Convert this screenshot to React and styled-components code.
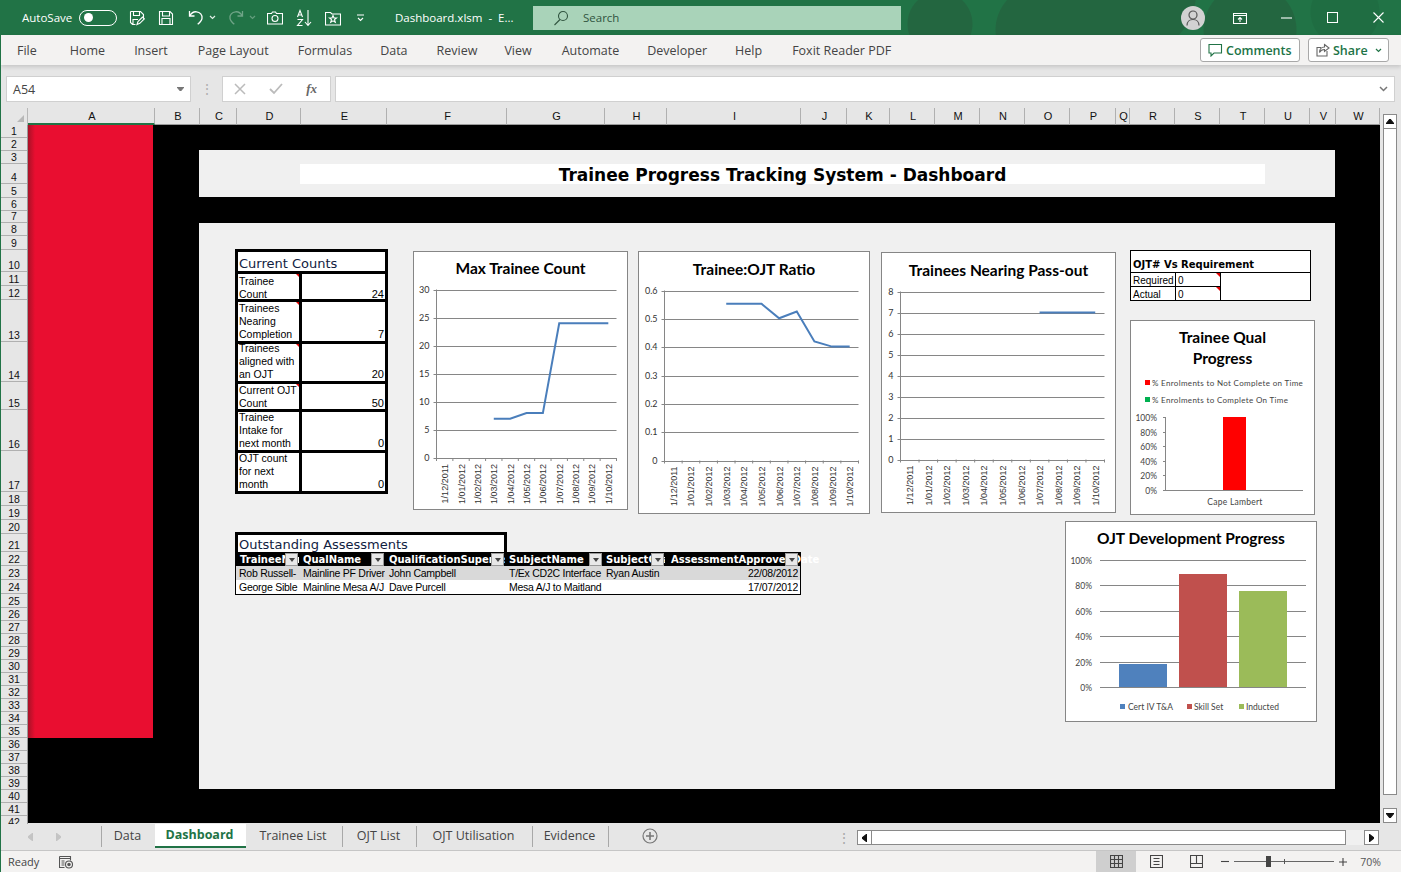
import React from 'react';
import styled, { createGlobalStyle } from 'styled-components';

const GlobalStyle = createGlobalStyle`
  html, body { margin: 0; padding: 0; background: #e6e6e6; }
  * { box-sizing: border-box; }
`;

const uiFont = `"Open Sans", "Noto Sans", sans-serif`;
const cellFont = `"Liberation Sans", Arial, sans-serif`;
const wideFont = `"DejaVu Sans", Verdana, sans-serif`;
const chartFont = `Lato, "Open Sans", sans-serif`;

const Window = styled.div`
  width: 1401px;
  height: 872px;
  display: flex;
  flex-direction: column;
  overflow: hidden;
  border-left: 1px solid #217346;
  font-family: ${uiFont};
`;

/* ---------- title bar ---------- */

const TitleBar = styled.div`
  height: 35px;
  flex: none;
  margin-left: -1px;
  padding-left: 22px;
  display: flex;
  align-items: center;
  color: #fff;
  font-size: 12px;
  background-color: #217346;
  background-image:
    radial-gradient(circle at 940px 24px, #236640 32px, transparent 33px),
    radial-gradient(circle at 1040px 30px, #236640 44px, transparent 45px),
    radial-gradient(circle at 1130px -10px, #236640 66px, transparent 67px),
    radial-gradient(circle at 1250px 30px, #236640 46px, transparent 47px),
    radial-gradient(circle at 1345px 12px, #1f6d42 34px, transparent 35px);
`;

const AutoSaveLabel = styled.span`
  width: 50px;
  white-space: nowrap;
  font-size: 11.5px;
`;

const Toggle = styled.span`
  width: 38px;
  height: 16px;
  margin-left: 7px;
  padding-left: 4px;
  border: 1px solid #fff;
  border-radius: 8px;
  display: flex;
  align-items: center;
  &::before {
    content: '';
    width: 9px;
    height: 9px;
    border-radius: 50%;
    background: #fff;
  }
`;

const QatIcon = styled.span`
  display: flex;
  margin-left: ${({ $gap }) => $gap}px;
  opacity: ${({ $dim }) => ($dim ? 0.35 : 1)};
`;

const DocTitle = styled.span`
  width: 117px;
  margin-left: 31px;
  white-space: nowrap;
  font-size: 11.5px;
`;

const SearchBox = styled.div`
  width: 368px;
  height: 24px;
  margin-left: 21px;
  padding-left: 20px;
  display: flex;
  align-items: center;
  gap: 14px;
  background: #a9d3b9;
  color: #30543f;
  font-size: 11.5px;
`;

const Avatar = styled.span`
  width: 24px;
  height: 24px;
  margin-left: auto;
  margin-right: 12px;
  border-radius: 50%;
  background: #d2d2d2;
  display: flex;
  align-items: center;
  justify-content: center;
`;

const WinButton = styled.span`
  width: 46px;
  height: 35px;
  display: flex;
  align-items: center;
  justify-content: center;
`;

/* ---------- ribbon ---------- */

const Ribbon = styled.div`
  height: 30px;
  flex: none;
  padding: 0 12px 0 16px;
  display: flex;
  align-items: center;
  background: #f3f2f1;
  box-shadow: 0 2px 4px rgba(0, 0, 0, 0.14);
  position: relative;
  z-index: 1;
`;

const RibbonTab = styled.span`
  margin-left: ${({ $gap }) => $gap}px;
  color: #444;
  font-size: 12.5px;
  white-space: nowrap;
`;

const RibbonActions = styled.div`
  margin-left: auto;
  display: flex;
  gap: 8px;
`;

const ActionButton = styled.span`
  width: ${({ $w }) => $w}px;
  height: 24px;
  padding: 0 6px 0 7px;
  display: flex;
  align-items: center;
  gap: 3px;
  border: 1px solid #a8a8a8;
  border-radius: 3px;
  background: #fff;
  color: #217346;
  font-size: 12.5px;
  font-weight: 600;
`;

const ShareCaret = styled.span`
  margin-left: auto;
  display: flex;
`;

/* ---------- formula bar ---------- */

const FormulaBar = styled.div`
  height: 43px;
  flex: none;
  padding: 11px 6px 0 5px;
  display: flex;
  background: #e6e6e6;
`;

const FieldBox = styled.div`
  width: ${({ $w }) => ($w ? `${$w}px` : 'auto')};
  flex: ${({ $w }) => ($w ? 'none' : 1)};
  height: 26px;
  margin-left: ${({ $gap }) => $gap || 0}px;
  padding: 0 6px;
  display: flex;
  align-items: center;
  justify-content: space-between;
  border: 1px solid #d0d0d0;
  background: #fff;
  color: #444;
  font-size: 12.5px;
`;

const GripDots = styled.span`
  width: 31px;
  height: 26px;
  display: flex;
  align-items: center;
  justify-content: center;
  color: #b0b0b0;
  font-size: 14px;
  line-height: 1;
`;

const FxMark = styled.span`
  font-family: "Liberation Serif", serif;
  font-style: italic;
  font-weight: 700;
  font-size: 13px;
  color: #666;
`;

const FormulaIcons = styled.div`
  width: 100%;
  padding: 0 7px 0 5px;
  display: flex;
  align-items: center;
  justify-content: space-between;
`;

/* ---------- grid ---------- */

const GridArea = styled.div`
  flex: 1;
  min-height: 0;
  display: flex;
`;

const GridMain = styled.div`
  width: 1379px;
  display: flex;
  flex-direction: column;
`;

const ColHeaderRow = styled.div`
  height: 17px;
  flex: none;
  display: flex;
  background: #e6e6e6;
`;

const CornerCell = styled.div`
  width: 27px;
  flex: none;
  position: relative;
  border-right: 1px solid #b8b8b8;
  &::after {
    content: '';
    position: absolute;
    right: 3px;
    bottom: 3px;
    border-left: 7px solid transparent;
    border-bottom: 7px solid #b8b8b8;
  }
`;

const ColHeader = styled.div`
  width: ${({ $w }) => $w}px;
  flex: none;
  padding-left: 2px;
  display: flex;
  align-items: center;
  justify-content: center;
  border-right: 1px solid #b0b0b0;
  border-bottom: ${({ $active }) => ($active ? '2px solid #217346' : '1px solid #9a9a9a')};
  color: #111;
  font-family: ${cellFont};
  font-size: 11px;
`;

const GridBody = styled.div`
  flex: 1;
  min-height: 0;
  display: flex;
`;

const RowHeaders = styled.div`
  width: 27px;
  flex: none;
  overflow: hidden;
  background: #e6e6e6;
  border-right: 1px solid #9a9a9a;
`;

const RowHeader = styled.div`
  height: ${({ $h }) => $h}px;
  display: flex;
  align-items: flex-end;
  justify-content: center;
  border-bottom: 1px solid #b0b0b0;
  color: #111;
  font-family: ${cellFont};
  font-size: 10.5px;
  line-height: 11px;
`;

const Sheet = styled.div`
  flex: 1;
  height: 698px;
  display: flex;
  background: #000;
  overflow: hidden;
`;

const RedColumn = styled.div`
  width: 125px;
  height: 613px;
  flex: none;
  background: linear-gradient(90deg, #a81227 0, #e90e30 7px);
`;

const Dashboard = styled.div`
  width: 1136px;
  margin-left: 46px;
  padding-top: 25px;
  display: flex;
  flex-direction: column;
  gap: 26px;
`;

const Banner = styled.div`
  height: 47px;
  padding: 14px 70px 0 101px;
  background: #f0f0f0;
`;

const BannerTitle = styled.div`
  height: 20px;
  background: #fff;
  color: #000;
  font-family: ${wideFont};
  font-size: 17px;
  font-weight: 700;
  line-height: 23px;
  text-align: center;
  white-space: nowrap;
`;

const Panel = styled.div`
  height: 566px;
  padding: 26px 18px 0 36px;
  background: #f0f0f0;
  display: flex;
  flex-direction: column;
  gap: 6px;
`;

const TopRow = styled.div`
  height: 266px;
  display: flex;
  align-items: flex-start;
`;

const BottomRow = styled.div`
  display: flex;
  align-items: flex-start;
  justify-content: space-between;
`;

/* ---------- counts table ---------- */

const CountsTable = styled.div`
  width: 153px;
  flex: none;
  border: 3px solid #000;
  background: #fff;
  font-family: ${cellFont};
  font-size: 10.5px;
  line-height: 13px;
  color: #000;
`;

const CountsHeading = styled.div`
  height: 22px;
  padding: 4px 0 0 1px;
  border-bottom: 3px solid #000;
  font-family: ${wideFont};
  font-size: 13px;
  line-height: 15px;
  color: #10213f;
  white-space: nowrap;
`;

const CountsRow = styled.div`
  height: ${({ $h }) => $h}px;
  display: flex;
  border-bottom: ${({ $last }) => ($last ? 'none' : '3px solid #000')};
`;

const CountsLabel = styled.div`
  width: 61px;
  flex: none;
  padding-left: 1px;
  position: relative;
  white-space: pre;
  display: flex;
  align-items: flex-end;
  &::after {
    content: '';
    display: ${({ $note }) => ($note ? 'block' : 'none')};
    position: absolute;
    top: 0;
    right: 0;
    border-left: 3px solid transparent;
    border-top: 3px solid #e00000;
  }
`;

const CountsText = styled.span`
  margin-bottom: ${({ $drop }) => -($drop || 0)}px;
`;

const CountsValue = styled.div`
  flex: 1;
  border-left: 3px solid #000;
  padding-right: 1px;
  display: flex;
  align-items: flex-end;
  justify-content: flex-end;
  font-size: 11px;
`;

/* ---------- charts ---------- */

const ChartFrame = styled.div`
  width: ${({ $w }) => $w}px;
  height: ${({ $h }) => $h}px;
  flex: none;
  margin-left: ${({ $ml }) => $ml || 0}px;
  margin-top: ${({ $mt }) => $mt || 0}px;
  border: 1px solid #868686;
  background: #fff;
  display: flex;
  flex-direction: column;
`;

const ChartTitle = styled.div`
  height: ${({ $h }) => $h}px;
  flex: none;
  padding-top: ${({ $pt }) => $pt}px;
  text-align: center;
  color: #000;
  font-family: ${chartFont};
  font-size: 15.5px;
  font-weight: 700;
  line-height: 21px;
  white-space: nowrap;
`;

const ChartSvg = styled.svg`
  display: block;
  flex: none;
  font-family: ${chartFont};
`;

const RightColumn = styled.div`
  margin-left: 14px;
  display: flex;
  flex-direction: column;
  gap: 19px;
`;

/* ---------- OJT requirement table ---------- */

const OjtTable = styled.div`
  width: 181px;
  height: 51px;
  margin-top: 1px;
  border: 1px solid #000;
  background: #fff;
  font-family: ${cellFont};
  font-size: 10px;
  line-height: 15px;
  color: #000;
`;

const OjtHeading = styled.div`
  height: 22px;
  padding: 7px 0 0 2px;
  border-bottom: 1px solid #000;
  font-family: ${wideFont};
  font-size: 10px;
  font-weight: 700;
  line-height: 14px;
  white-space: nowrap;
`;

const OjtRow = styled.div`
  height: ${({ $h }) => $h}px;
  width: 90px;
  display: flex;
  border-bottom: ${({ $last }) => ($last ? 'none' : '1px solid #000')};
`;

const OjtCell = styled.div`
  width: 45px;
  padding-left: 2px;
  position: relative;
  border-right: 1px solid #000;
  &::after {
    content: '';
    display: ${({ $note }) => ($note ? 'block' : 'none')};
    position: absolute;
    top: 0;
    right: 0;
    border-left: 4px solid transparent;
    border-top: 4px solid #e00000;
  }
`;

/* ---------- assessments table ---------- */

const Assessments = styled.div`
  width: 566px;
  margin-top: 11px;
  font-family: ${cellFont};
  font-size: 10.5px;
  color: #000;
`;

const AssessmentsHeading = styled.div`
  width: 272px;
  height: 20px;
  padding: 2px 0 0 1px;
  border: 3px solid #000;
  border-bottom: 0;
  background: #fff;
  font-family: ${wideFont};
  font-size: 13px;
  line-height: 15px;
  color: #10213f;
  white-space: nowrap;
`;

const HeadRow = styled.div`
  height: 14px;
  display: flex;
  background: #000;
`;

const HeadCell = styled.div`
  width: ${({ $w }) => $w}px;
  padding-left: ${({ $pl }) => $pl}px;
  position: relative;
  overflow: ${({ $spill }) => ($spill ? 'visible' : 'hidden')};
  color: #fff;
  font-family: ${wideFont};
  font-size: 10px;
  font-weight: 700;
  line-height: 15px;
  white-space: nowrap;
`;

const FilterButton = styled.span`
  position: absolute;
  top: 1px;
  right: 1px;
  width: 13px;
  height: 13px;
  border: 1px solid #999;
  background: #e8e8e8;
  display: flex;
  align-items: center;
  justify-content: center;
  &::before {
    content: '';
    border-left: 3px solid transparent;
    border-right: 3px solid transparent;
    border-top: 4px solid #444;
  }
`;

const DataRows = styled.div`
  border: 1px solid #000;
  border-top: 0;
`;

const DataRow = styled.div`
  height: 14px;
  display: flex;
  background: ${({ $shade }) => ($shade ? '#d9d9d9' : '#fff')};
  line-height: 14px;
`;

const DataCell = styled.div`
  width: ${({ $w }) => $w}px;
  padding-left: ${({ $pl }) => $pl}px;
  overflow: hidden;
  white-space: nowrap;
  text-align: ${({ $right }) => ($right ? 'right' : 'left')};
  letter-spacing: -0.25px;
`;

/* ---------- scrollbars ---------- */

const VScroll = styled.div`
  flex: 1;
  padding: 6px 4px 1px 3px;
  display: flex;
  flex-direction: column;
  background: #e6e6e6;
`;

const ScrollButton = styled.div`
  width: ${({ $w }) => $w || 14}px;
  height: ${({ $h }) => $h || 15}px;
  flex: none;
  border: 1px solid #8a8a8a;
  background: #fff;
  display: flex;
  align-items: center;
  justify-content: center;
`;

const VThumb = styled.div`
  height: 666px;
  flex: none;
  border: 1px solid #8a8a8a;
  border-top: 0;
  background: #fff;
`;

const VRest = styled.div`
  flex: 1;
`;

const TabBar = styled.div`
  height: 27px;
  flex: none;
  display: flex;
  align-items: flex-start;
  background: #e6e6e6;
  border-bottom: 1px solid #c6c6c6;
`;

const NavArrows = styled.div`
  width: 100px;
  height: 26px;
  padding: 0 40px 0 27px;
  display: flex;
  align-items: center;
  justify-content: space-between;
`;

const SheetTab = styled.div`
  height: ${({ $active }) => ($active ? 24 : 21)}px;
  margin-top: ${({ $active }) => ($active ? 0 : 2)}px;
  width: ${({ $w }) => $w}px;
  flex: none;
  padding-right: 2px;
  padding-bottom: ${({ $active }) => ($active ? 1 : 2)}px;
  display: flex;
  align-items: center;
  justify-content: center;
  border-left: ${({ $active, $noLine }) => ($active || $noLine ? '0' : '1px solid #a8a8a8')};
  border-bottom: ${({ $active }) => ($active ? '2px solid #217346' : '0')};
  background: ${({ $active }) => ($active ? '#fff' : 'transparent')};
  color: ${({ $active }) => ($active ? '#217346' : '#444')};
  font-size: 12.5px;
  font-weight: ${({ $active }) => ($active ? 700 : 400)};
  white-space: nowrap;
`;

const TabEnd = styled.div`
  width: 1px;
  height: 21px;
  margin-top: 2px;
  background: #a8a8a8;
`;

const AddSheet = styled.span`
  margin: 4px 0 0 33px;
  display: flex;
`;

const TabGrip = styled.span`
  margin-left: 179px;
  width: 20px;
  height: 26px;
  display: flex;
  align-items: center;
  color: #aaa;
  font-size: 14px;
`;

const HScroll = styled.div`
  margin-top: 6px;
  width: 522px;
  display: flex;
`;

const HThumb = styled.div`
  width: 474px;
  height: 15px;
  border: 1px solid #8a8a8a;
  border-left: 0;
  background: #fff;
`;

const HRest = styled.div`
  width: 18px;
  height: 15px;
  background: #f0f0f0;
`;

/* ---------- status bar ---------- */

const StatusBar = styled.div`
  height: 21px;
  flex: none;
  padding-left: 7px;
  display: flex;
  align-items: center;
  background: #f3f2f1;
  color: #444;
  font-size: 11px;
`;

const ViewButton = styled.span`
  width: 40px;
  height: 21px;
  display: flex;
  align-items: center;
  justify-content: center;
  background: ${({ $active }) => ($active ? '#cfcfcf' : 'transparent')};
`;

const ZoomSlider = styled.div`
  width: 100px;
  height: 11px;
  margin: 0 5px;
  display: flex;
  align-items: center;
  position: relative;
  &::before {
    content: '';
    width: 100%;
    height: 1px;
    background: #666;
  }
`;

const ZoomThumb = styled.span`
  position: absolute;
  left: 32px;
  top: 0;
  width: 5px;
  height: 11px;
  background: #444;
`;

const ZoomTick = styled.span`
  position: absolute;
  left: 50px;
  top: 3px;
  width: 1px;
  height: 5px;
  background: #555;
`;

const ZoomLabel = styled.span`
  margin-left: 13px;
  font-size: 10.5px;
  color: #555;
`;

/* ---------- data ---------- */

const colWidths = [
  ['A', 127, true], ['B', 45], ['C', 37], ['D', 64], ['E', 86], ['F', 120], ['G', 98], ['H', 62], ['I', 134],
  ['J', 46], ['K', 43], ['L', 45], ['M', 45], ['N', 45], ['O', 45], ['P', 46], ['Q', 14], ['R', 45], ['S', 45],
  ['T', 45], ['U', 45], ['V', 26], ['W', 44],
];

const rowHeights = [
  13, 13, 13, 20, 14, 13, 12, 13, 14, 22, 14, 14, 42, 40, 28, 41, 41, 14, 14, 14, 18, 14, 14, 14, 14,
  13, 13, 13, 13, 13, 13, 13, 13, 13, 13, 13, 13, 13, 13, 13, 13, 13,
];

const counts = [
  { label: 'Trainee\nCount', value: 24, h: 28, note: true, drop: 2 },
  { label: 'Trainees\nNearing\nCompletion', value: 7, h: 42, note: true },
  { label: 'Trainees\naligned with\nan OJT', value: 20, h: 40, note: true },
  { label: 'Current OJT\nCount', value: 50, h: 28, note: true, drop: 1 },
  { label: 'Trainee\nIntake for\nnext month', value: 0, h: 41 },
  { label: 'OJT count\nfor next\nmonth', value: 0, h: 38, last: true },
];

const dateLabels = [
  '1/12/2011', '1/01/2012', '1/02/2012', '1/03/2012', '1/04/2012', '1/05/2012',
  '1/06/2012', '1/07/2012', '1/08/2012', '1/09/2012', '1/10/2012',
];

const lineCharts = [
  {
    title: 'Max Trainee Count',
    frame: { x: 413, y: 251, w: 215, h: 259 },
    ml: 25, mt: 2, titleH: 30, titlePt: 6,
    plot: { x0: 436.5, x1: 616.5, top: 289.5, bottom: 458 },
    yLabels: ['0', '5', '10', '15', '20', '25', '30'],
    max: 30,
    values: [null, null, null, 7, 7, 8, 8, 24, 24, 24, 24],
  },
  {
    title: 'Trainee:OJT Ratio',
    frame: { x: 638, y: 251, w: 232, h: 263 },
    ml: 10, mt: 2, titleH: 30, titlePt: 7,
    plot: { x0: 664.5, x1: 858.5, top: 290.5, bottom: 460.5 },
    yLabels: ['0', '0.1', '0.2', '0.3', '0.4', '0.5', '0.6'],
    max: 0.6,
    values: [null, null, null, 0.553, 0.553, 0.553, 0.502, 0.526, 0.42, 0.402, 0.402],
  },
  {
    title: 'Trainees Nearing Pass-out',
    frame: { x: 881, y: 252, w: 235, h: 261 },
    ml: 11, mt: 3, titleH: 30, titlePt: 7,
    plot: { x0: 900.5, x1: 1104.5, top: 291.5, bottom: 459.5 },
    yLabels: ['0', '1', '2', '3', '4', '5', '6', '7', '8'],
    max: 8,
    values: [null, null, null, null, null, null, null, 7, 7, 7, 7],
  },
];

const assessmentCols = [
  { name: 'TraineeName', w: 64, pl: 5 },
  { name: 'QualName', w: 86, pl: 4 },
  { name: 'QualificationSupervisor', w: 120, pl: 4 },
  { name: 'SubjectName', w: 98, pl: 4 },
  { name: 'SubjectCoach', w: 62, pl: 3 },
  { name: 'AssessmentApprovedDate', w: 134, pl: 6, spill: true },
];

const assessmentRows = [
  ['Rob Russell-', 'Mainline PF Driver', 'John Campbell', 'T/Ex CD2C Interface', 'Ryan Austin', '22/08/2012'],
  ['George Sible', 'Mainline Mesa A/J', 'Dave Purcell', 'Mesa A/J to Maitland', '', '17/07/2012'],
];

const dataPadding = [3, 4, 4, 4, 3, 0];

const ribbonTabs = [
  ['File', 0], ['Home', 33], ['Insert', 29], ['Page Layout', 30], ['Formulas', 29], ['Data', 28],
  ['Review', 29], ['View', 27], ['Automate', 30], ['Developer', 28], ['Help', 28], ['Foxit Reader PDF', 30],
];

const sheetTabs = [
  ['Data', 54], ['Dashboard', 91, true], ['Trainee List', 96, false, true], ['OJT List', 74],
  ['OJT Utilisation', 116], ['Evidence', 76],
];

/* ---------- small drawings ---------- */

const Ico = ({ w = 16, h = 16, children, stroke = '#fff', sw = 1.1 }) => (
  <svg width={w} height={h} viewBox={`0 0 ${w} ${h}`} fill="none" stroke={stroke} strokeWidth={sw}>
    {children}
  </svg>
);

const Chevron = () => (
  <Ico w={7} h={5} sw={1.2} stroke="#dfeee5">
    <path d="M1 1l2.5 2.5L6 1" />
  </Ico>
);

const LineChart = ({ chart }) => {
  const { frame, plot, yLabels, max, values } = chart;
  const n = values.length;
  const step = (plot.x1 - plot.x0) / n;
  const innerW = frame.w - 2;
  const svgH = frame.h - 2 - chart.titleH;
  const viewY = frame.y + 1 + chart.titleH;
  const points = values
    .map((v, i) => (v === null ? null : `${plot.x0 + step * (i + 0.5)},${plot.bottom - (v / max) * (plot.bottom - plot.top)}`))
    .filter(Boolean)
    .join(' ');
  return (
    <ChartFrame $w={frame.w} $h={frame.h} $ml={chart.ml} $mt={chart.mt}>
      <ChartTitle $h={chart.titleH} $pt={chart.titlePt}>{chart.title}</ChartTitle>
      <ChartSvg width={innerW} height={svgH} viewBox={`${frame.x + 1} ${viewY} ${innerW} ${svgH}`}>
        {yLabels.map((label, i) => {
          const y = Math.round(plot.bottom - (i / (yLabels.length - 1)) * (plot.bottom - plot.top)) + 0.5;
          return (
            <g key={label}>
              <line x1={plot.x0 - 3} x2={plot.x1} y1={y} y2={y} stroke="#868686" />
              <text x={plot.x0 - 7} y={y + 2.5} textAnchor="end" fontSize="9" fill="#333">{label}</text>
            </g>
          );
        })}
        <line x1={plot.x0} x2={plot.x0} y1={plot.top} y2={plot.bottom + 3} stroke="#868686" />
        {dateLabels.map((label, i) => {
          const x = plot.x0 + step * (i + 1);
          const cx = plot.x0 + step * (i + 0.5) + 3.5;
          const by = plot.bottom + 6;
          return (
            <g key={label}>
              <line x1={x} x2={x} y1={plot.bottom} y2={plot.bottom + 3} stroke="#868686" />
              <text
                x={cx}
                y={by}
                textAnchor="end"
                fontFamily={cellFont}
                fontSize="9"
                fill="#333"
                transform={`rotate(-90 ${cx} ${by})`}
              >
                {label}
              </text>
            </g>
          );
        })}
        <polyline points={points} fill="none" stroke="#4a7ebb" strokeWidth="2" />
      </ChartSvg>
    </ChartFrame>
  );
};

const QualChart = () => (
  <ChartFrame $w={185} $h={195}>
    <ChartTitle $h={52} $pt={6}>Trainee Qual<br />Progress</ChartTitle>
    <ChartSvg width={183} height={141} viewBox="1131 373 183 141">
      <rect x="1145" y="380" width="5" height="5" fill="#ff0000" />
      <text x="1152" y="386" fontSize="8" fill="#444" letterSpacing="0.33">% Enrolments to Not Complete on Time</text>
      <rect x="1145" y="397" width="5" height="5" fill="#00b050" />
      <text x="1152" y="403" fontSize="8" fill="#444" letterSpacing="0.33">% Enrolments to Complete On Time</text>
      {['0%', '20%', '40%', '60%', '80%', '100%'].map((label, i) => {
        const y = Math.round(490 - i * 14.6) + 0.5;
        return (
          <g key={label}>
            <line x1="1163" x2="1165.5" y1={y} y2={y} stroke="#868686" />
            <text x="1157" y={y + 3} textAnchor="end" fontSize="8.5" fill="#444">{label}</text>
          </g>
        );
      })}
      <line x1="1165.5" x2="1165.5" y1="417" y2="490.5" stroke="#868686" />
      <line x1="1165" x2="1303" y1="490.5" y2="490.5" stroke="#868686" />
      <rect x="1223" y="417" width="23" height="73" fill="#ff0000" />
      <text x="1235" y="505" textAnchor="middle" fontSize="8.5" fill="#444" letterSpacing="0.25">Cape Lambert</text>
    </ChartSvg>
  </ChartFrame>
);

const DevChart = () => (
  <ChartFrame $w={252} $h={201}>
    <ChartTitle $h={30} $pt={6}>OJT Development Progress</ChartTitle>
    <ChartSvg width={250} height={169} viewBox="1066 552 250 169">
      {['0%', '20%', '40%', '60%', '80%', '100%'].map((label, i) => {
        const y = Math.round(687 - i * 25.4) + 0.5;
        return (
          <g key={label}>
            <line x1="1100" x2="1306" y1={y} y2={y} stroke="#868686" />
            <text x="1092" y={y + 3} textAnchor="end" fontSize="8.5" fill="#444">{label}</text>
          </g>
        );
      })}
      <rect x="1119" y="664" width="48" height="23" fill="#4f81bd" />
      <rect x="1179" y="574" width="48" height="113" fill="#c0504d" />
      <rect x="1239" y="591" width="48" height="96" fill="#9bbb59" />
      <rect x="1120" y="704" width="5" height="5" fill="#4f81bd" />
      <text x="1128" y="710" fontSize="8.5" fill="#444">Cert IV T&amp;A</text>
      <rect x="1187" y="704" width="5" height="5" fill="#c0504d" />
      <text x="1194" y="710" fontSize="8.5" fill="#444">Skill Set</text>
      <rect x="1239" y="704" width="5" height="5" fill="#9bbb59" />
      <text x="1246" y="710" fontSize="8.5" fill="#444">Inducted</text>
    </ChartSvg>
  </ChartFrame>
);

const App = () => (
  <Window>
    <GlobalStyle />
    <TitleBar>
      <AutoSaveLabel>AutoSave</AutoSaveLabel>
      <Toggle />
      <QatIcon $gap={12}>
        <Ico>
          <path d="M1.5 1.5h10l3 3v4M1.5 1.5v11l2 2h3M4.5 1.5v4h6v-4M4 14.5v-5h5" />
          <path d="M8 14.5l1-3 4.5-4.5 1.8 1.8L10.8 13.3z" />
        </Ico>
      </QatIcon>
      <QatIcon $gap={13}>
        <Ico>
          <path d="M1.5 1.5h10.5l2.5 2.5v10.5h-13z" />
          <path d="M4.5 1.5v4.5h7v-4.5M4 14.5v-6h8v6" />
        </Ico>
      </QatIcon>
      <QatIcon $gap={14}>
        <Ico w={16} h={17} sw={1.3}>
          <path d="M1.5 2v5h5M1.8 6.8C3.5 3.8 6 2.5 8.5 2.8c3.5.4 6 3 5.5 6.5-.3 2.2-2 4-4.3 6" />
        </Ico>
      </QatIcon>
      <QatIcon $gap={5}><Chevron /></QatIcon>
      <QatIcon $gap={12} $dim>
        <Ico w={16} h={17} sw={1.3}>
          <path d="M14.5 2v5h-5M14.2 6.8C12.5 3.8 10 2.5 7.5 2.8 4 3.2 1.5 5.8 2 9.3c.3 2.2 2 4 4.3 6" />
        </Ico>
      </QatIcon>
      <QatIcon $gap={5} $dim><Chevron /></QatIcon>
      <QatIcon $gap={11}>
        <Ico>
          <path d="M.5 3.5h4l1-1.5h3l1 1.5h6V14H.5z" />
          <circle cx="8" cy="8.5" r="3" />
        </Ico>
      </QatIcon>
      <QatIcon $gap={13}>
        <Ico w={16} h={18}>
          <path d="M1.5 8L4 1.5 6.5 8M2.5 6h3M1.5 10.5h5l-5 6h5" />
          <path d="M12 1v15M9 13l3 3.5 3-3.5" />
        </Ico>
      </QatIcon>
      <QatIcon $gap={13}>
        <Ico>
          <path d="M.5 2.5h5L7 4h8.5v11H.5z" />
          <path d="M8 5.5L9 8h2.500L9.500 9.700l.8 2.600L8 10.800l-2.300 1.500.8-2.600L4.500 8H7z" />
        </Ico>
      </QatIcon>
      <QatIcon $gap={16}>
        <Ico w={7} h={8} sw={1.1}>
          <path d="M0 1h7M1 4l2.5 2.5L6 4" />
        </Ico>
      </QatIcon>
      <DocTitle>Dashboard.xlsm&nbsp; -&nbsp; E...</DocTitle>
      <SearchBox>
        <Ico stroke="#30543f">
          <circle cx="10" cy="6" r="4.5" />
          <path d="M7 9.5L1.5 15" />
        </Ico>
        Search
      </SearchBox>
      <Avatar>
        <Ico w={14} h={16} stroke="#555" sw={1.2}>
          <circle cx="7" cy="5" r="4" />
          <path d="M1 15.5c0-3.500 2.500-6 6-6s6 2.500 6 6" />
        </Ico>
      </Avatar>
      <WinButton>
        <Ico w={14} h={12}>
          <path d="M.5 1.5h13v10H.5zM.5 3.5h13M7 10V5.5M5 7.5l2-2 2 2" />
        </Ico>
      </WinButton>
      <WinButton>
        <Ico w={11} h={2}><path d="M0 1h11" /></Ico>
      </WinButton>
      <WinButton>
        <Ico w={11} h={11}><path d="M.5.5h10v10H.5z" /></Ico>
      </WinButton>
      <WinButton>
        <Ico w={11} h={11}><path d="M.5.5l10 10M10.5.5l-10 10" /></Ico>
      </WinButton>
    </TitleBar>

    <Ribbon>
      {ribbonTabs.map(([name, gap]) => (
        <RibbonTab key={name} $gap={gap}>{name}</RibbonTab>
      ))}
      <RibbonActions>
        <ActionButton $w={100}>
          <Ico w={15} h={14} stroke="#217346">
            <path d="M1 1.5h12.5V10H6l-3 3v-3H1z" />
          </Ico>
          Comments
        </ActionButton>
        <ActionButton $w={81}>
          <Ico w={14} h={14} stroke="#666">
            <path d="M11 8v5H1V4.5h4M8.5 1.5L13 5 8.5 8.5v-2c-2.500 0-4 1-5 3 0-3.500 2-5.500 5-5.500z" />
          </Ico>
          Share
          <ShareCaret>
            <Ico w={7} h={5} stroke="#217346" sw={1.2}>
              <path d="M1 1l2.5 2.5L6 1" />
            </Ico>
          </ShareCaret>
        </ActionButton>
      </RibbonActions>
    </Ribbon>

    <FormulaBar>
      <FieldBox $w={185}>
        A54
        <Ico w={7} h={4} stroke="#777"><path d="M0 0h7L3.5 4z" fill="#777" /></Ico>
      </FieldBox>
      <GripDots>⋮</GripDots>
      <FieldBox $w={109}>
        <FormulaIcons>
          <Ico w={12} h={12} stroke="#bbb" sw={1.5}><path d="M1 1l10 10M11 1L1 11" /></Ico>
          <Ico w={14} h={12} stroke="#bbb" sw={1.8}><path d="M1 6l4 4 8-9" /></Ico>
          <FxMark>fx</FxMark>
        </FormulaIcons>
      </FieldBox>
      <FieldBox $gap={4}>
        <span />
        <Ico w={9} h={6} stroke="#777" sw={1.5}><path d="M1 1l3.5 3.5L8 1" /></Ico>
      </FieldBox>
    </FormulaBar>

    <GridArea>
      <GridMain>
        <ColHeaderRow>
          <CornerCell />
          {colWidths.map(([name, w, active]) => (
            <ColHeader key={name} $w={w} $active={active}>{name}</ColHeader>
          ))}
        </ColHeaderRow>
        <GridBody>
          <RowHeaders>
            {rowHeights.map((h, i) => (
              <RowHeader key={i} $h={h}>{i + 1}</RowHeader>
            ))}
          </RowHeaders>
          <Sheet>
            <RedColumn />
            <Dashboard>
              <Banner>
                <BannerTitle>Trainee Progress Tracking System - Dashboard</BannerTitle>
              </Banner>
              <Panel>
                <TopRow>
                  <CountsTable>
                    <CountsHeading>Current Counts</CountsHeading>
                    {counts.map((row) => (
                      <CountsRow key={row.label} $h={row.h} $last={row.last}>
                        <CountsLabel $note={row.note}>
                          <CountsText $drop={row.drop}>{row.label}</CountsText>
                        </CountsLabel>
                        <CountsValue>
                          <CountsText $drop={row.drop}>{row.value}</CountsText>
                        </CountsValue>
                      </CountsRow>
                    ))}
                  </CountsTable>
                  {lineCharts.map((chart) => (
                    <LineChart key={chart.title} chart={chart} />
                  ))}
                  <RightColumn>
                    <OjtTable>
                      <OjtHeading>OJT# Vs Requirement</OjtHeading>
                      <OjtRow $h={14}>
                        <OjtCell>Required</OjtCell>
                        <OjtCell $note>0</OjtCell>
                      </OjtRow>
                      <OjtRow $h={13} $last>
                        <OjtCell>Actual</OjtCell>
                        <OjtCell $note>0</OjtCell>
                      </OjtRow>
                    </OjtTable>
                    <QualChart />
                  </RightColumn>
                </TopRow>
                <BottomRow>
                  <Assessments>
                    <AssessmentsHeading>Outstanding Assessments</AssessmentsHeading>
                    <HeadRow>
                      {assessmentCols.map((col) => (
                        <HeadCell key={col.name} $w={col.w} $pl={col.pl} $spill={col.spill}>
                          {col.name}
                          <FilterButton />
                        </HeadCell>
                      ))}
                    </HeadRow>
                    <DataRows>
                      {assessmentRows.map((row, r) => (
                        <DataRow key={row[0]} $shade={r === 0}>
                          {row.map((value, c) => (
                            <DataCell
                              key={c}
                              $w={assessmentCols[c].w - (c === 0 || c === 5 ? 1 : 0)}
                              $right={c === 5}
                              $pl={dataPadding[c]}
                            >
                              {value}
                            </DataCell>
                          ))}
                        </DataRow>
                      ))}
                    </DataRows>
                  </Assessments>
                  <DevChart />
                </BottomRow>
              </Panel>
            </Dashboard>
          </Sheet>
        </GridBody>
      </GridMain>
      <VScroll>
        <ScrollButton>
          <Ico w={8} h={5} stroke="#111"><path d="M4 0l4 5H0z" fill="#111" /></Ico>
        </ScrollButton>
        <VThumb />
        <VRest />
        <ScrollButton>
          <Ico w={8} h={5} stroke="#111"><path d="M0 0h8L4 5z" fill="#111" /></Ico>
        </ScrollButton>
      </VScroll>
    </GridArea>

    <TabBar>
      <NavArrows>
        <Ico w={5} h={8} stroke="#c4c4c4"><path d="M5 0v8L0 4z" fill="#c4c4c4" /></Ico>
        <Ico w={5} h={8} stroke="#c4c4c4"><path d="M0 0v8l5-4z" fill="#c4c4c4" /></Ico>
      </NavArrows>
      {sheetTabs.map(([name, w, active, noLine]) => (
        <SheetTab key={name} $w={w} $active={active} $noLine={noLine}>{name}</SheetTab>
      ))}
      <TabEnd />
      <AddSheet>
        <Ico w={16} h={16} stroke="#777" sw={1.2}>
          <circle cx="8" cy="8" r="7" />
          <path d="M8 4v8M4 8h8" strokeWidth="1.6" />
        </Ico>
      </AddSheet>
      <TabGrip>⋮</TabGrip>
      <HScroll>
        <ScrollButton $w={15}>
          <Ico w={5} h={8} stroke="#111"><path d="M5 0v8L0 4z" fill="#111" /></Ico>
        </ScrollButton>
        <HThumb />
        <HRest />
        <ScrollButton $w={15}>
          <Ico w={5} h={8} stroke="#111"><path d="M0 0v8l5-4z" fill="#111" /></Ico>
        </ScrollButton>
      </HScroll>
    </TabBar>

    <StatusBar>
      <span>Ready</span>
      <QatIcon $gap={20}>
        <Ico w={14} h={14} stroke="#555">
          <path d="M.5 1.5h11v4M.5 1.5v11h5M.5 3.5h11M2.5 6h3M2.5 8h3M2.5 10h3" />
          <circle cx="10" cy="9.5" r="3.5" />
          <circle cx="10" cy="9.5" r="1.2" fill="#555" />
        </Ico>
      </QatIcon>
      <QatIcon $gap={1023}>
        <ViewButton $active>
          <Ico w={13} h={13} stroke="#444">
            <path d="M.5.5h12v12H.5zM4.5.5v12M8.5.5v12M.5 4.5h12M.5 8.5h12" />
          </Ico>
        </ViewButton>
        <ViewButton>
          <Ico w={13} h={13} stroke="#444">
            <path d="M.5.5h12v12H.5zM3.5 3.5h6M3.5 6.5h6M3.5 9.5h6" />
          </Ico>
        </ViewButton>
        <ViewButton>
          <Ico w={13} h={13} stroke="#444">
            <path d="M.5 8.5h12v4H.5zM.5 8.5v-8h12v8M6.5.5v8" />
          </Ico>
        </ViewButton>
      </QatIcon>
      <QatIcon $gap={5}>
        <Ico w={8} h={3} stroke="#444"><path d="M0 1.5h8" /></Ico>
      </QatIcon>
      <ZoomSlider>
        <ZoomThumb />
        <ZoomTick />
      </ZoomSlider>
      <Ico w={8} h={8} stroke="#444"><path d="M0 4h8M4 0v8" /></Ico>
      <ZoomLabel>70%</ZoomLabel>
    </StatusBar>
  </Window>
);

export default App;
